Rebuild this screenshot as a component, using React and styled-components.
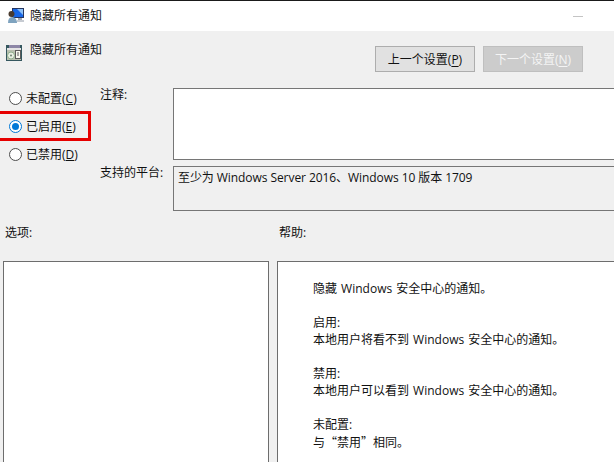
import React from "react";
import styled, { createGlobalStyle } from "styled-components";

const GlobalStyle = createGlobalStyle`
  html, body {
    margin: 0;
    padding: 0;
    overflow: hidden;
    background: #f0f0f0;
  }
  body {
    font-family: "Open Sans", "Noto Sans CJK SC", sans-serif;
    font-size: 12px;
    color: #111;
  }
`;

const Dialog = styled.div`
  position: relative;
  width: 614px;
  height: 462px;
  overflow: hidden;
  display: flex;
  flex-direction: column;
  background: #f0f0f0;
`;

const TitleBar = styled.div`
  height: 30px;
  flex: none;
  display: flex;
  align-items: center;
  gap: 6px;
  padding: 0 31px 0 8px;
  background: #fff;
  border-top: 1px solid #1a1a1a;
`;

const TitleText = styled.span`
  flex: 1;
  line-height: 30px;
`;

const Minimize = styled.span`
  width: 10px;
  height: 1px;
  background: #c4c4c4;
`;

const Header = styled.div`
  height: 57px;
  flex: none;
  display: flex;
  align-items: flex-start;
  padding: 14px 31px 0 6px;
  box-sizing: border-box;
`;

const HeaderTitle = styled.span`
  flex: 1;
  margin-left: 8px;
  line-height: 10px;
`;

const NavButton = styled.button`
  width: 100px;
  height: 26px;
  margin: 1px 0 0 8px;
  padding: 0;
  font: inherit;
  box-sizing: border-box;
  border: 1px solid ${(p) => (p.disabled ? "#bfbfbf" : "#adadad")};
  background: ${(p) => (p.disabled ? "#cccccc" : "#e1e1e1")};
  color: ${(p) => (p.disabled ? "#f4f4f4" : "#111")};
  u {
    text-underline-offset: 2px;
  }
`;

const Settings = styled.div`
  display: flex;
  flex: none;
  height: 123px;
`;

const RadioColumn = styled.div`
  width: 100px;
  flex: none;
  display: flex;
  flex-direction: column;
  gap: 8px;
  padding: 0 0 0 9px;
  box-sizing: border-box;
`;

const RadioRow = styled.label`
  display: flex;
  align-items: center;
  gap: 4px;
  height: 20px;
`;

const RadioDot = styled.span`
  width: 13px;
  height: 13px;
  flex: none;
  box-sizing: border-box;
  border-radius: 50%;
  background: #fff;
  border: 1px solid ${(p) => (p.$checked ? "#0078d7" : "#4d4d4d")};
  display: flex;
  align-items: center;
  justify-content: center;
  &::after {
    content: "";
    width: 7px;
    height: 7px;
    border-radius: 50%;
    background: ${(p) => (p.$checked ? "#0078d7" : "transparent")};
  }
`;

const Fields = styled.div`
  flex: 1;
  display: grid;
  grid-template-columns: 73px 1fr;
  grid-template-rows: 72px 45px;
  row-gap: 6px;
  margin-right: -4px;
`;

const FieldLabel = styled.span`
  line-height: 12px;
  padding-top: 1px;
`;

const NoteBox = styled.div`
  box-sizing: border-box;
  background: #fff;
  border: 1px solid #767676;
`;

const PlatformBox = styled.div`
  box-sizing: border-box;
  background: #f0f0f0;
  border: 1px solid #767676;
  padding: 3px 4px;
  line-height: 16px;
  letter-spacing: -0.07px;
`;

const Panels = styled.div`
  flex: 1;
  min-height: 0;
  display: grid;
  grid-template-columns: 266px 1fr;
  grid-template-rows: 50px 1fr;
  column-gap: 8px;
  padding-left: 3px;
  margin-right: -4px;
`;

const PanelLabel = styled.span`
  padding: 16px 0 0 2px;
  line-height: 12px;
`;

const ListBox = styled.div`
  box-sizing: border-box;
  background: #fff;
  border: 1px solid #6d6d6d;
  height: 220px;
`;

const HelpBox = styled(ListBox)`
  padding: 18px 0 0 35px;
`;

const HelpLine = styled.div`
  height: 17px;
  line-height: 17px;
  white-space: nowrap;
  word-spacing: 1px;
  font-family: ${(p) =>
    p.$cjk ? '"Noto Sans CJK SC", sans-serif' : "inherit"};
`;

const Highlight = styled.div`
  position: absolute;
  left: -4px;
  top: 111px;
  width: 95px;
  height: 30px;
  box-sizing: border-box;
  border: 3px solid #e60000;
  pointer-events: none;
`;

const IconSlot = styled.svg`
  flex: none;
  display: block;
`;

function ComputerIcon() {
  return (
    <IconSlot width="16" height="16" viewBox="0 0 16 16">
      <rect x="4" y="0" width="12" height="10" fill="#26355f" />
      <rect x="5" y="1" width="10" height="8" fill="#1766e6" />
      <path d="M9 1h6v6z" fill="#8cc0f7" />
      <rect x="10" y="10" width="4" height="2" fill="#a3aab5" />
      <rect x="9" y="12" width="7" height="2" fill="#c6cbd2" />
      <circle cx="3.500" cy="6" r="3" fill="#4a3b2f" />
      <path d="M0 15c0-4 1.500-6 4-6s5 2 5 6z" fill="#7fa3bf" />
    </IconSlot>
  );
}

function PolicyIcon() {
  return (
    <IconSlot width="16" height="16" viewBox="0 0 16 16">
      <rect x="0" y="0" width="16" height="16" fill="#35575f" />
      <rect x="3" y="0" width="11" height="3" fill="#8d86a6" />
      <rect x="1" y="3" width="14" height="2" fill="#e4e4e4" />
      <rect x="1" y="5" width="14" height="10" fill="#b9c0b0" />
      <circle cx="5" cy="10.500" r="3.500" fill="#e8efe2" stroke="#8fae8c" strokeWidth="1" />
      <circle cx="5" cy="10.500" r="1" fill="#6d7f70" />
      <rect x="9.500" y="5.500" width="5" height="8" fill="#f6f6ee" stroke="#5a5a5a" strokeWidth="1" />
      <path d="M11 8h2M11 10h2" stroke="#5a5a5a" strokeWidth="1" />
    </IconSlot>
  );
}

const helpLines = [
  { text: "隐藏 Windows 安全中心的通知。" },
  { text: "" },
  { text: "启用:" },
  { text: "本地用户将看不到 Windows 安全中心的通知。" },
  { text: "" },
  { text: "禁用:" },
  { text: "本地用户可以看到 Windows 安全中心的通知。" },
  { text: "" },
  { text: "未配置:" },
  { text: "与“禁用”相同。", cjk: true },
];

const radios = [
  { label: "未配置", key: "C" },
  { label: "已启用", key: "E", checked: true },
  { label: "已禁用", key: "D" },
];

export default function App() {
  return (
    <Dialog>
      <GlobalStyle />
      <TitleBar>
        <ComputerIcon />
        <TitleText>隐藏所有通知</TitleText>
        <Minimize />
      </TitleBar>
      <Header>
        <PolicyIcon />
        <HeaderTitle>隐藏所有通知</HeaderTitle>
        <NavButton>
          上一个设置(<u>P</u>)
        </NavButton>
        <NavButton disabled>
          下一个设置(<u>N</u>)
        </NavButton>
      </Header>
      <Settings>
        <RadioColumn>
          {radios.map((r) => (
            <RadioRow key={r.key}>
              <RadioDot $checked={r.checked} />
              <span>
                {r.label}(<u>{r.key}</u>)
              </span>
            </RadioRow>
          ))}
        </RadioColumn>
        <Fields>
          <FieldLabel>注释:</FieldLabel>
          <NoteBox />
          <FieldLabel>支持的平台:</FieldLabel>
          <PlatformBox>至少为 Windows Server 2016、Windows 10 版本 1709</PlatformBox>
        </Fields>
      </Settings>
      <Panels>
        <PanelLabel>选项:</PanelLabel>
        <PanelLabel>帮助:</PanelLabel>
        <ListBox />
        <HelpBox>
          {helpLines.map((line, i) => (
            <HelpLine key={i} $cjk={line.cjk}>
              {line.text}
            </HelpLine>
          ))}
        </HelpBox>
      </Panels>
      <Highlight />
    </Dialog>
  );
}
